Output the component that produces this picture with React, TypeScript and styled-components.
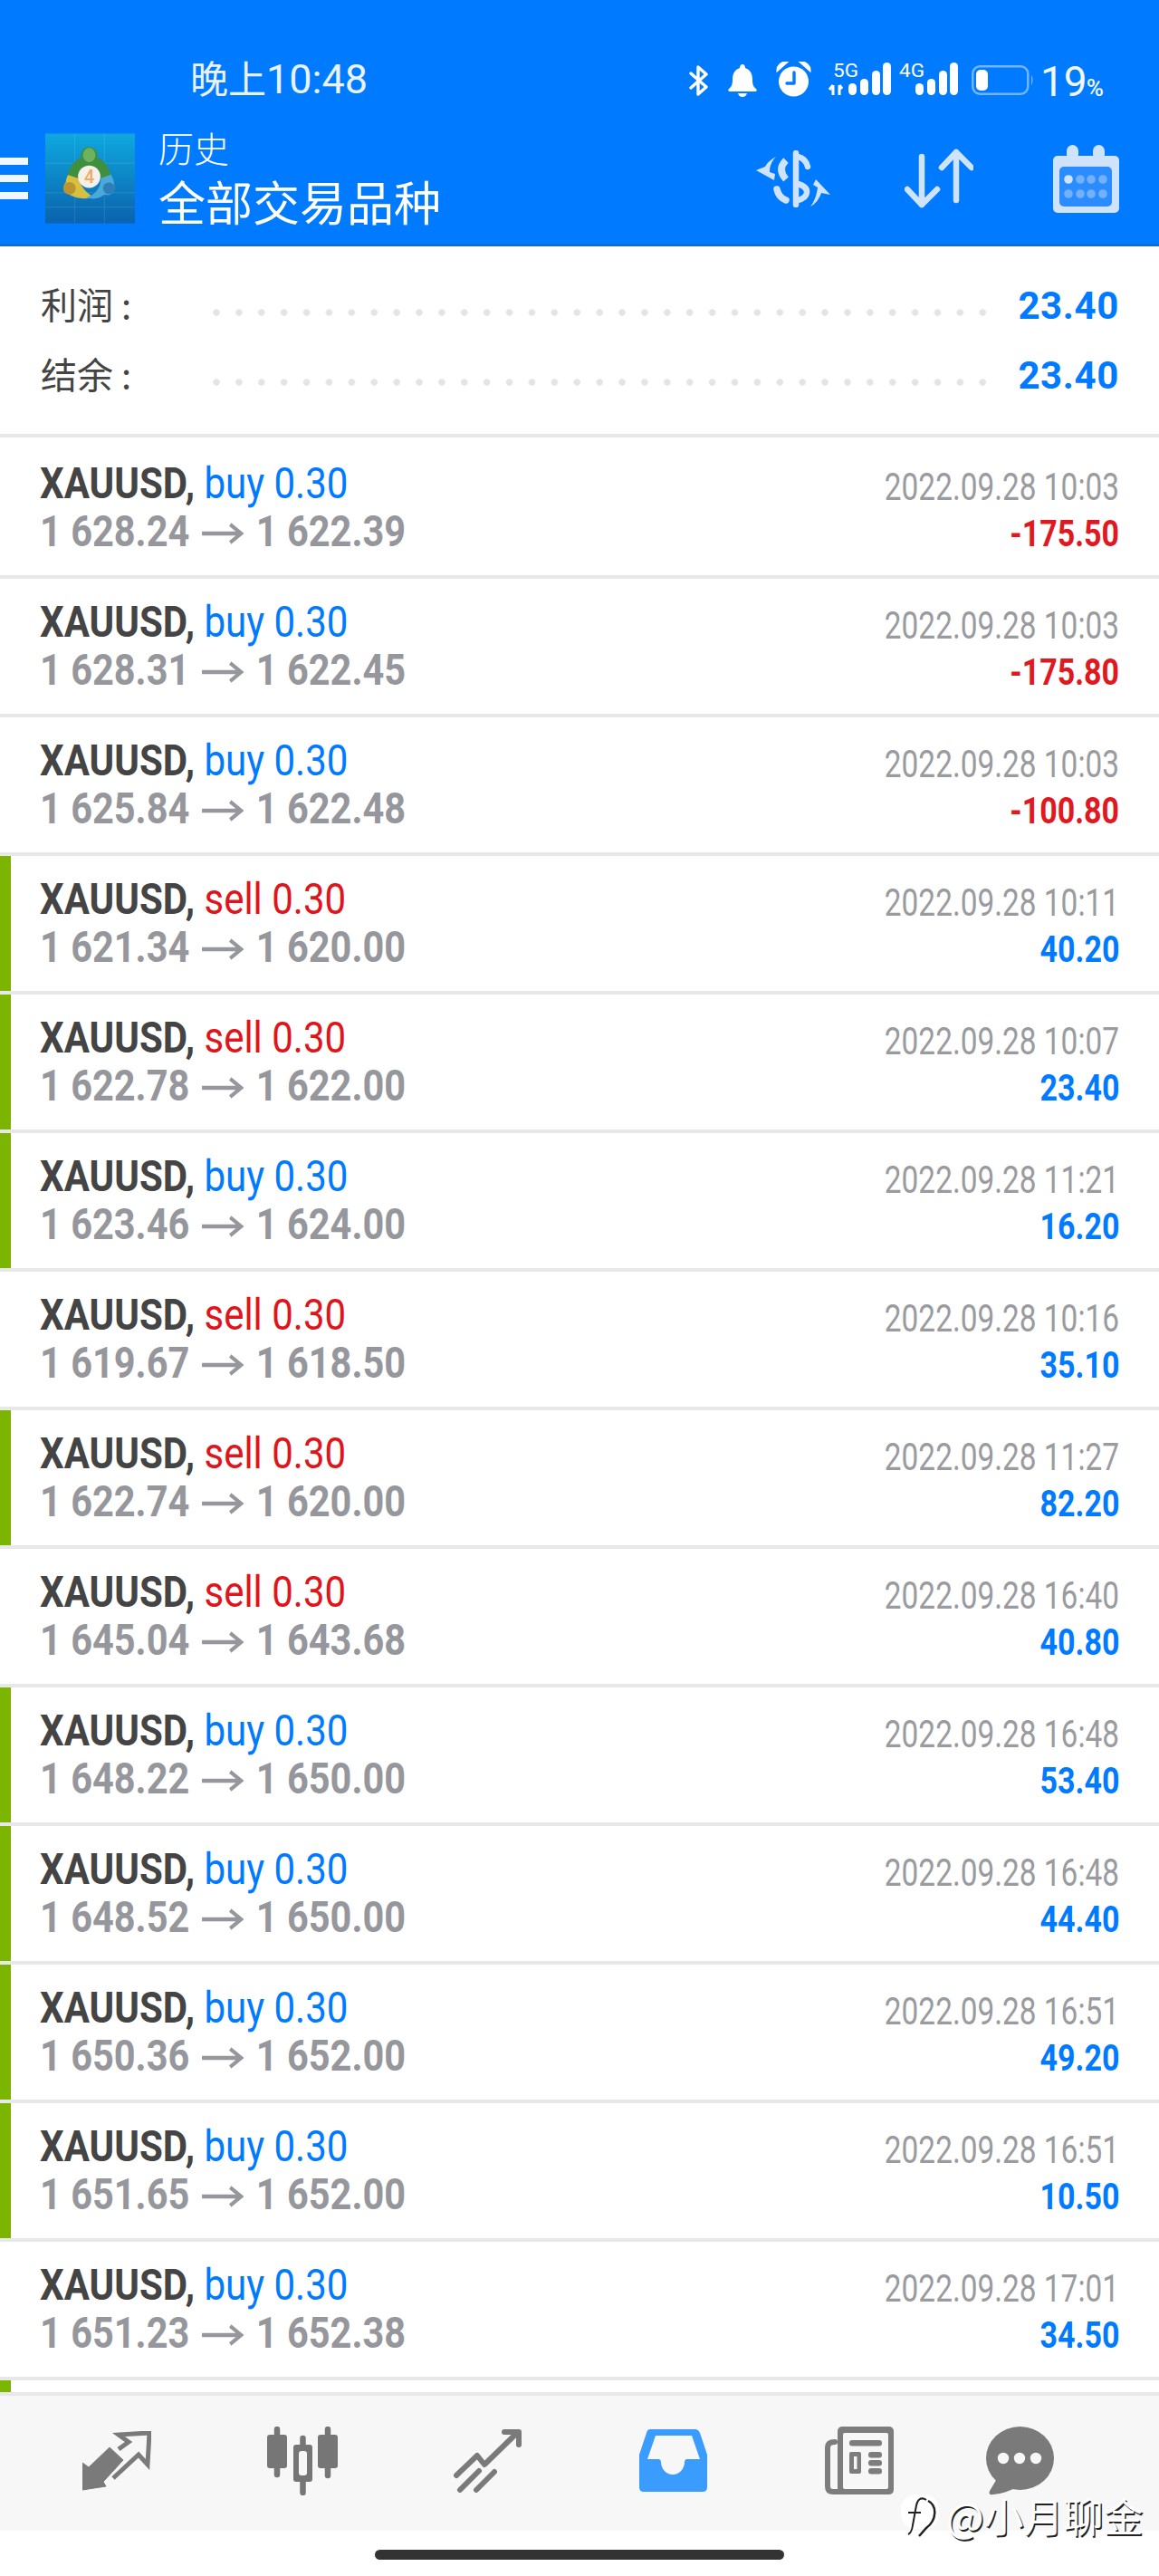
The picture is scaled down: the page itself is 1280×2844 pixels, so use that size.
import React from "react";
import styled, { createGlobalStyle } from "styled-components";

const Global = createGlobalStyle`
  html, body { margin: 0; padding: 0; background: #fff; }
  body { font-family: Roboto, "Noto Sans CJK SC", sans-serif; }
  #root { width: 1280px; height: 2844px; overflow: hidden; }
  * { box-sizing: border-box; }
`;

const Page = styled.div`
  position: relative;
  width: 1280px;
  height: 2844px;
  background: #fff;
  display: flex;
  flex-direction: column;
`;

const Header = styled.header`
  height: 272px;
  background: #007aff;
  border-bottom: 3px solid #0a70d6;
  display: flex;
  flex-direction: column;
`;

const StatusBar = styled.div`
  height: 125px;
  padding: 68px 0 0 210px;
  display: flex;
  align-items: flex-start;
  color: #e9f2ff;
`;

const Clock = styled.div`
  font: 400 45px/40px Roboto, "Noto Sans CJK SC", sans-serif;
  width: 545px;
  white-space: nowrap;
  & > span { font-size: 42px; }
`;

const StatusSvg = styled.svg<{ $ml: number; $mt?: number }>`
  display: block;
  flex: none;
  margin-left: ${(p) => p.$ml}px;
  margin-top: ${(p) => p.$mt ?? 0}px;
  fill: #fff;
`;

const Percent = styled.div`
  margin: 3px 0 0 7px;
  font: 400 46px/38px Roboto, sans-serif;
  color: #f2f7ff;
  white-space: nowrap;
  & > span { font-size: 26px; font-weight: 500; margin-left: -1px; }
`;

const AppBar = styled.div`
  flex: 1;
  display: flex;
  align-items: center;
  padding: 0 44px 0 0;
`;

const Burger = styled.div`
  width: 31px;
  height: 46px;
  flex: none;
  display: flex;
  flex-direction: column;
  justify-content: space-between;
  & > i { display: block; height: 8px; background: #f1f7ff; }
`;

const LogoSvg = styled.svg`
  display: block;
  flex: none;
  margin-left: 19px;
`;

const Titles = styled.div`
  margin: -6px 0 0 26px;
  color: #fff;
  font-family: "Noto Sans CJK SC", sans-serif;
  display: flex;
  flex-direction: column;
`;

const SubTitle = styled.div`
  font-size: 39px;
  line-height: 56px;
  font-weight: 300;
`;

const MainTitle = styled.div`
  font-size: 52px;
  line-height: 64px;
  font-weight: 400;
`;

const Actions = styled.div`
  margin-left: auto;
  display: flex;
  align-items: center;
  color: #cfe3fd;
`;

const ActionSvg = styled.svg<{ $ml?: number }>`
  display: block;
  flex: none;
  margin-left: ${(p) => p.$ml ?? 0}px;
`;

const Summary = styled.section`
  height: 211px;
  padding: 27px 44px 0 45px;
  border-bottom: 4px solid #e8e8e9;
  background: #fff;
`;

const SummaryRow = styled.div`
  height: 77px;
  display: flex;
  align-items: center;
`;

const SummaryLabel = styled.div`
  width: 190px;
  flex: none;
  margin-top: -6px;
  font: 400 40px/1 "Noto Sans CJK SC", sans-serif;
  color: #444;
`;

const Dots = styled.div`
  flex: 1;
  height: 8px;
  margin: 14px 34px 0 0;
  background-image: radial-gradient(circle at 4px 4px, #e4e4e5 3.4px, transparent 4px);
  background-size: 24.9px 8px;
  background-repeat: repeat-x;
`;

const SummaryValue = styled.div`
  font: 700 42px/1 Roboto, sans-serif;
  letter-spacing: 0.6px;
  color: #007aff;
  flex: none;
`;

const Row = styled.div<{ $first?: boolean }>`
  height: ${(p) => (p.$first ? 156 : 153)}px;
  flex: none;
  display: flex;
  border-bottom: 4px solid #e8e8e9;
  background: #fff;
`;

const SliverRow = styled.div`
  height: 17px;
  flex: none;
  display: flex;
  border-bottom: 4px solid #e8e8e9;
  background: #fff;
`;

const Marker = styled.div<{ $on?: boolean }>`
  width: 12px;
  flex: none;
  background: ${(p) => (p.$on ? "#7cb500" : "transparent")};
`;

const RowBody = styled.div<{ $first?: boolean }>`
  flex: 1;
  display: flex;
  justify-content: space-between;
  padding: ${(p) => (p.$first ? 24 : 21)}px 44px 0 32px;
`;

const LeftCol = styled.div`
  display: flex;
  flex-direction: column;
  align-items: flex-start;
`;

const RightCol = styled.div`
  display: flex;
  flex-direction: column;
  align-items: flex-end;
  margin-top: 5px;
`;

const TradeLine = styled.div`
  height: 54px;
  font-size: 48px;
  line-height: 54px;
  white-space: pre;
  transform: scaleX(0.875);
  transform-origin: left center;
`;

const Symbol = styled.span`
  font-weight: 700;
  color: #444;
`;

const Side = styled.span<{ $sell: boolean }>`
  font-weight: 400;
  color: ${(p) => (p.$sell ? "#e0141b" : "#007aff")};
`;

const PriceLine = styled.div`
  height: 54px;
  margin-top: -1px;
  display: flex;
  align-items: center;
  font-size: 48px;
  line-height: 54px;
  font-weight: 700;
  color: #96979c;
  white-space: pre;
  transform: scaleX(0.865);
  transform-origin: left center;
`;

const PriceArrow = styled.svg`
  display: block;
  flex: none;
  margin: 4px 16px 0 16px;
`;

const DateText = styled.div`
  height: 52px;
  font-size: 42px;
  line-height: 52px;
  color: #9a9b9f;
  white-space: pre;
  transform: scaleX(0.795);
  transform-origin: right center;
`;

const Profit = styled.div<{ $loss: boolean }>`
  height: 52px;
  font-size: 40px;
  line-height: 52px;
  font-weight: 700;
  color: ${(p) => (p.$loss ? "#e0181f" : "#007aff")};
  transform: scaleX(0.85);
  transform-origin: right center;
`;

const NavBar = styled.nav`
  height: 149px;
  flex: none;
  background: #f7f7f7;
  padding: 0 0 6px 26px;
  display: grid;
  grid-template-columns: repeat(5, 205px) 150px;
  align-items: center;
  justify-items: center;
`;

const NavSvg = styled.svg`
  display: block;
`;

const HomeArea = styled.div`
  flex: 1;
  background: #fff;
  padding-top: 21px;
  display: flex;
  justify-content: center;
  align-items: flex-start;
`;

const HomeIndicator = styled.div`
  width: 452px;
  height: 11px;
  border-radius: 6px;
  background: #333;
`;

const Watermark = styled.div`
  position: absolute;
  left: 995px;
  top: 2752px;
  display: flex;
  align-items: center;
  color: #fff;
  font: 400 44px/50px "Noto Sans CJK SC", sans-serif;
  text-shadow: 1.5px 1.5px 0 #222;
  white-space: nowrap;
`;

const WatermarkMark = styled.svg`
  display: block;
  flex: none;
  margin-right: 6px;
`;

type Trade = {
  side: "buy" | "sell";
  open: string;
  close: string;
  time: string;
  profit: string;
  bar?: boolean;
};

const trades: Trade[] = [
  { side: "buy", open: "1 628.24", close: "1 622.39", time: "10:03", profit: "-175.50" },
  { side: "buy", open: "1 628.31", close: "1 622.45", time: "10:03", profit: "-175.80" },
  { side: "buy", open: "1 625.84", close: "1 622.48", time: "10:03", profit: "-100.80" },
  { side: "sell", open: "1 621.34", close: "1 620.00", time: "10:11", profit: "40.20", bar: true },
  { side: "sell", open: "1 622.78", close: "1 622.00", time: "10:07", profit: "23.40", bar: true },
  { side: "buy", open: "1 623.46", close: "1 624.00", time: "11:21", profit: "16.20", bar: true },
  { side: "sell", open: "1 619.67", close: "1 618.50", time: "10:16", profit: "35.10" },
  { side: "sell", open: "1 622.74", close: "1 620.00", time: "11:27", profit: "82.20", bar: true },
  { side: "sell", open: "1 645.04", close: "1 643.68", time: "16:40", profit: "40.80" },
  { side: "buy", open: "1 648.22", close: "1 650.00", time: "16:48", profit: "53.40", bar: true },
  { side: "buy", open: "1 648.52", close: "1 650.00", time: "16:48", profit: "44.40", bar: true },
  { side: "buy", open: "1 650.36", close: "1 652.00", time: "16:51", profit: "49.20", bar: true },
  { side: "buy", open: "1 651.65", close: "1 652.00", time: "16:51", profit: "10.50", bar: true },
  { side: "buy", open: "1 651.23", close: "1 652.38", time: "17:01", profit: "34.50" },
];

const SignalBars = () => (
  <>
    <rect x="22" y="23" width="9" height="13" rx="4.5" />
    <rect x="35" y="18" width="9" height="18" rx="4.5" />
    <rect x="48" y="9" width="9" height="27" rx="4.5" />
    <rect x="60" y="0" width="9" height="36" rx="4.5" />
  </>
);

const Logo = () => (
  <LogoSvg width="99" height="100" viewBox="0 0 100 100">
    <defs>
      <linearGradient id="lg-bg" x1="0" y1="0" x2="0" y2="1">
        <stop offset="0" stopColor="#0fa8de" />
        <stop offset="1" stopColor="#0a62ad" />
      </linearGradient>
    </defs>
    <rect width="100" height="100" fill="url(#lg-bg)" />
    <path d="M33 0V100M66 0V100M0 33H100M0 66H100M0 82H100" stroke="#fff" strokeOpacity=".12" strokeWidth="1" />
    <path d="M36 36C28 40 23 48 23 54C19 58 20 66 27 68C33 72 44 74 54 71C46 66 40 60 37 50Z" fill="#d8bf3f" />
    <circle cx="27" cy="61" r="7" fill="#b89530" />
    <path d="M66 38C74 44 77 52 77 58C79 66 72 70 66 68C60 73 52 74 46 71C54 69 62 62 62 50Z" fill="#4aa8db" />
    <circle cx="71" cy="61" r="6.500" fill="#2d7fb5" />
    <path d="M49 15C42 15 39 21 40 27C32 30 27 37 25 46L37 50H61L73 46C71 37 66 30 58 27C59 21 56 15 49 15Z" fill="#3f8f3f" />
    <ellipse cx="49" cy="24" rx="7" ry="8" fill="#6db25e" />
    <circle cx="49" cy="48" r="12.500" fill="#f5f1ea" />
    <text x="49" y="55" textAnchor="middle" fontFamily="Roboto, sans-serif" fontSize="20" fontWeight="500" fill="#efaa62">4</text>
  </LogoSvg>
);

export default function App() {
  return (
    <Page>
      <Global />
      <Header>
        <StatusBar>
          <Clock>
            <span>晚上</span>10:48
          </Clock>
          <StatusSvg $ml={5} $mt={4} width="23" height="34" viewBox="0 0 23 34" style={{ fill: "none" }}>
            <path d="M3 9L20 24L11 32V2L20 10L3 25" stroke="#fff" strokeWidth="3.4" strokeLinejoin="round" strokeLinecap="round" />
          </StatusSvg>
          <StatusSvg $ml={21} $mt={3} width="32" height="36" viewBox="0 0 32 36">
            <path d="M16 0C18 0 19 2 19 4C25 6 27 11 27 17C27 22 28 25 31 27C32 28 32 30 30 30H2C0 30 0 28 1 27C4 25 5 22 5 17C5 11 7 6 13 4C13 2 14 0 16 0Z" />
            <path d="M11 32H21C20 35 18 36 16 36C14 36 12 35 11 32Z" />
          </StatusSvg>
          <StatusSvg $ml={19} width="43" height="39" viewBox="0 0 43 39">
            <circle cx="21.5" cy="22" r="16.5" />
            <path d="M4 9C4 5 8 1 13 1L4 9ZM39 9C39 5 35 1 30 1L39 9Z" stroke="#fff" strokeWidth="3" strokeLinecap="round" />
            <path d="M22 12V24H14" stroke="#007aff" strokeWidth="3.4" fill="none" strokeLinecap="round" strokeLinejoin="round" />
          </StatusSvg>
          <StatusSvg $ml={17} $mt={-5} width="69" height="43" viewBox="0 -6 69 43">
            <text x="5" y="16" fontFamily="Roboto, sans-serif" fontSize="21" fill="#fff" textLength="28" lengthAdjust="spacingAndGlyphs">5G</text>
            <path d="M5 25V36M1 30L5 25M12 36V25M15 29L12 25" stroke="#fff" strokeWidth="3" fill="none" />
            <SignalBars />
          </StatusSvg>
          <StatusSvg $ml={9} $mt={-5} width="65" height="43" viewBox="4 -6 65 43">
            <text x="4" y="16" fontFamily="Roboto, sans-serif" fontSize="21" fill="#fff" textLength="28" lengthAdjust="spacingAndGlyphs">4G</text>
            <SignalBars />
          </StatusSvg>
          <StatusSvg $ml={15} $mt={4} width="69" height="33" viewBox="0 0 69 33">
            <rect x="1.25" y="1.25" width="61" height="30.5" rx="8" fill="none" stroke="#fff" strokeOpacity=".45" strokeWidth="2.5" />
            <rect x="5" y="5" width="13" height="23" rx="5" />
            <path d="M66 11C68 13 68 20 66 22Z" fillOpacity=".45" />
          </StatusSvg>
          <Percent>
            19<span>%</span>
          </Percent>
        </StatusBar>
        <AppBar>
          <Burger>
            <i />
            <i />
            <i />
          </Burger>
          <Logo />
          <Titles>
            <SubTitle>历史</SubTitle>
            <MainTitle>全部交易品种</MainTitle>
          </Titles>
          <Actions>
            <ActionSvg width="82" height="63" viewBox="0 0 82 63" fill="none" stroke="currentColor" strokeLinecap="round">
              <path d="M44 3V60" strokeWidth="6.5" />
              <path d="M46 7Q55 9 57 18" strokeWidth="6.5" />
              <path d="M33 11Q23 21 33 32" strokeWidth="7.5" strokeLinecap="butt" />
              <path d="M46 37Q57 40 56 47Q55 53 46 55" strokeWidth="6.5" />
              <path d="M23 43Q25 52 33 55" strokeWidth="7.5" />
              <path d="M22 7C16 10 12 14 10 18L0 22L20 33L21 26L15 24C15 18 17 12 22 7Z" fill="currentColor" stroke="none" />
              <path d="M60 62C66 59 70 53 72 47L82 49L66 32L63 38L68 41C67 48 65 56 60 62Z" fill="currentColor" stroke="none" />
            </ActionSvg>
            <ActionSvg $ml={82} width="76" height="66" viewBox="0 0 76 66" fill="none" stroke="currentColor" strokeWidth="6.5" strokeLinecap="round" strokeLinejoin="round">
              <path d="M19 9V62M3 45L19 62L36 45" />
              <path d="M57 57V4M41 21L57 4L74 21" />
            </ActionSvg>
            <ActionSvg $ml={88} width="73" height="75" viewBox="0 0 73 75">
              <rect y="12" width="73" height="63" rx="5" fill="currentColor" />
              <rect x="7" y="24" width="58" height="44" rx="5" fill="#2a8cff" />
              <rect x="15" y="0" width="13" height="17" rx="6.5" fill="currentColor" />
              <rect x="44" y="0" width="13" height="17" rx="6.5" fill="currentColor" />
              <circle cx="17" cy="38" r="4.8" fill="currentColor" />
              <g fill="#74b1fd">
                <circle cx="30" cy="38" r="4.8" />
                <circle cx="42" cy="38" r="4.8" />
                <circle cx="55" cy="38" r="4.8" />
                <circle cx="17" cy="54" r="4.8" />
                <circle cx="30" cy="54" r="4.8" />
                <circle cx="42" cy="54" r="4.8" />
                <circle cx="55" cy="54" r="4.8" />
              </g>
            </ActionSvg>
          </Actions>
        </AppBar>
      </Header>

      <Summary>
        <SummaryRow>
          <SummaryLabel>利润 :</SummaryLabel>
          <Dots />
          <SummaryValue>23.40</SummaryValue>
        </SummaryRow>
        <SummaryRow>
          <SummaryLabel>结余 :</SummaryLabel>
          <Dots />
          <SummaryValue>23.40</SummaryValue>
        </SummaryRow>
      </Summary>

      {trades.map((t, i) => (
        <Row key={i} $first={i === 0}>
          <Marker $on={t.bar} />
          <RowBody $first={i === 0}>
            <LeftCol>
              <TradeLine>
                <Symbol>XAUUSD,</Symbol>
                <Side $sell={t.side === "sell"}> {t.side} 0.30</Side>
              </TradeLine>
              <PriceLine>
                {t.open}
                <PriceArrow width="53" height="24" viewBox="0 0 53 24" fill="none" stroke="#96979c" strokeWidth="4.5">
                  <path d="M0 12H50M36 2L50 12L36 22" />
                </PriceArrow>
                {t.close}
              </PriceLine>
            </LeftCol>
            <RightCol>
              <DateText>2022.09.28 {t.time}</DateText>
              <Profit $loss={t.profit.startsWith("-")}>{t.profit}</Profit>
            </RightCol>
          </RowBody>
        </Row>
      ))}
      <SliverRow>
        <Marker $on />
      </SliverRow>

      <NavBar>
        <NavSvg width="76" height="66" viewBox="0 0 76 66">
          <path d="M0 35L0 65L26 61L23 56L45 32L30 18L7 40Z" fill="#7a7a7a" stroke="#7a7a7a" strokeWidth="1" strokeLinejoin="round" />
          <path d="M40 20L51 12L40 4L74 2L72 37L62 26L34 52" fill="none" stroke="#7a7a7a" strokeWidth="5" strokeLinejoin="miter" />
        </NavSvg>
        <NavSvg width="78" height="76" viewBox="0 0 78 76" fill="#767676">
          <path d="M11 3V53M67 3V54M39.5 13V73" stroke="#767676" strokeWidth="6.5" strokeLinecap="round" />
          <rect y="9" width="22" height="37" rx="3" />
          <rect x="56" y="9" width="22" height="37" rx="3" />
          <rect x="29" y="20" width="21" height="41" rx="3" />
          <rect x="35" y="27" width="9" height="27" rx="3" fill="#f7f7f7" />
        </NavSvg>
        <NavSvg width="76" height="70" viewBox="0 0 76 70" fill="none" stroke="#7a7a7a" strokeWidth="6" strokeLinecap="round" strokeLinejoin="round">
          <path d="M3 51L26 29L34 39L70 4" />
          <path d="M56 3H72V17" />
          <path d="M28 46L7 67M45 47L25 67" />
        </NavSvg>
        <NavSvg width="75" height="69" viewBox="0 0 75 69">
          <path d="M12 0H62Q65 0 67 4L75 28V64Q75 69 70 69H5Q0 69 0 64V28L8 4Q9 0 12 0Z" fill="#3b9cff" />
          <path d="M18 7H58L67 33H52Q50 34 50 36C50 44 44 50 37 50C30 50 24 44 24 36Q24 34 22 33H9Z" fill="#f7f7f7" />
        </NavSvg>
        <NavSvg width="77" height="75" viewBox="0 0 77 75">
          <path d="M12 17Q4 17 4 23V66Q4 72 10 72H18" fill="none" stroke="#7d7d7d" strokeWidth="6" strokeLinecap="round" />
          <rect x="15" width="62" height="75" rx="5" fill="#7d7d7d" />
          <rect x="21" y="7" width="50" height="62" rx="2" fill="#f7f7f7" />
          <g fill="#7d7d7d">
            <rect x="28" y="15" width="36" height="6.5" rx="3" />
            <rect x="28" y="28" width="13" height="24" rx="2" />
            <rect x="49" y="28" width="15" height="6.5" rx="3" />
            <rect x="49" y="37" width="15" height="6.5" rx="3" />
            <rect x="49" y="46" width="15" height="6.5" rx="3" />
          </g>
          <rect x="33" y="33" width="3.5" height="14" fill="#f7f7f7" />
        </NavSvg>
        <NavSvg width="75" height="76" viewBox="0 0 75 76">
          <ellipse cx="37.5" cy="35" rx="37.5" ry="35" fill="#7a7a7a" />
          <path d="M13 56L4 71Q2 76 8 75C18 74 26 71 34 67Z" fill="#7a7a7a" />
          <circle cx="19" cy="35" r="6.2" fill="#f7f7f7" />
          <circle cx="37" cy="35" r="6.2" fill="#f7f7f7" />
          <circle cx="55" cy="35" r="6.2" fill="#f7f7f7" />
        </NavSvg>
      </NavBar>
      <HomeArea>
        <HomeIndicator />
      </HomeArea>

      <Watermark>
        <WatermarkMark width="44" height="50" viewBox="0 0 44 50">
          <rect x="0" y="2" width="42" height="38" rx="16" fill="#fff" />
          <path d="M28 8C22 4 18 8 17 14L13 36Q12 44 8 46" fill="none" stroke="#222" strokeWidth="2" />
          <path d="M8 22H22" stroke="#222" strokeWidth="2" />
          <path d="M30 9C40 14 40 30 28 39L20 48" fill="none" stroke="#222" strokeWidth="2.5" />
        </WatermarkMark>
        @小月聊金
      </Watermark>
    </Page>
  );
}
